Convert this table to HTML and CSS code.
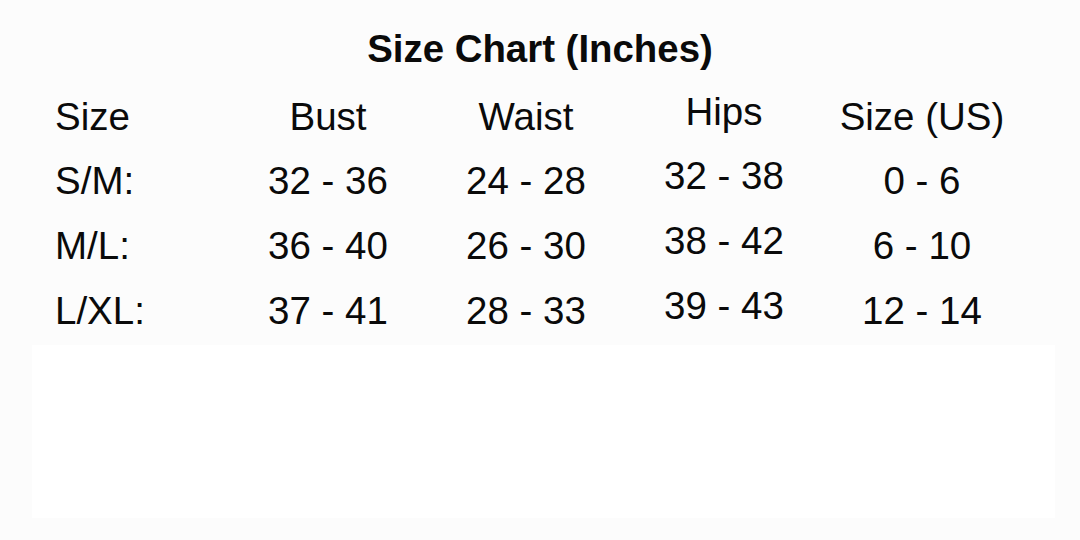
FILE: index.html
```html
<!DOCTYPE html>
<html lang="en">
<head>
<meta charset="utf-8">
<title>Size Chart</title>
<link rel="stylesheet" href="styles.css">
</head>
<body>
<main class="page">
  <h1 class="title">Size Chart (Inches)</h1>
  <div class="chart">
    <div class="row head">
      <div class="cell label">Size</div>
      <div class="cell">Bust</div>
      <div class="cell">Waist</div>
      <div class="cell hips">Hips</div>
      <div class="cell">Size (US)</div>
    </div>
    <div class="row">
      <div class="cell label">S/M:</div>
      <div class="cell">32 - 36</div>
      <div class="cell">24 - 28</div>
      <div class="cell hips">32 - 38</div>
      <div class="cell">0 - 6</div>
    </div>
    <div class="row">
      <div class="cell label">M/L:</div>
      <div class="cell">36 - 40</div>
      <div class="cell">26 - 30</div>
      <div class="cell hips">38 - 42</div>
      <div class="cell">6 - 10</div>
    </div>
    <div class="row">
      <div class="cell label">L/XL:</div>
      <div class="cell">37 - 41</div>
      <div class="cell">28 - 33</div>
      <div class="cell hips">39 - 43</div>
      <div class="cell">12 - 14</div>
    </div>
  </div>
  <div class="panel"></div>
</main>
</body>
</html>
```

FILE: styles.css
```css
html, body {
  margin: 0;
  padding: 0;
}

body {
  background: #fcfcfc;
  color: #0a0a0a;
  font-family: Arial, "Liberation Sans", sans-serif;
  width: 1080px;
  height: 540px;
  overflow: hidden;
}

.page {
  display: flex;
  flex-direction: column;
  padding-top: 27px;
}

.title {
  margin: 0;
  font-size: 38.4px;
  font-weight: 700;
  line-height: 44px;
  text-align: center;
}

.chart {
  margin-top: 13px;
  padding-left: 55px;
  font-size: 38.5px;
}

.row {
  display: grid;
  grid-template-columns: 174px repeat(4, 198px);
  height: 65px;
  line-height: 65px;
}

.row.head {
  height: 64px;
}

.cell {
  text-align: center;
  white-space: nowrap;
}

.cell.label {
  text-align: left;
}

.cell.hips {
  margin-top: -5px;
}

.panel {
  margin: 2px 25px 0 32px;
  height: 173px;
  background: #ffffff;
}
```
